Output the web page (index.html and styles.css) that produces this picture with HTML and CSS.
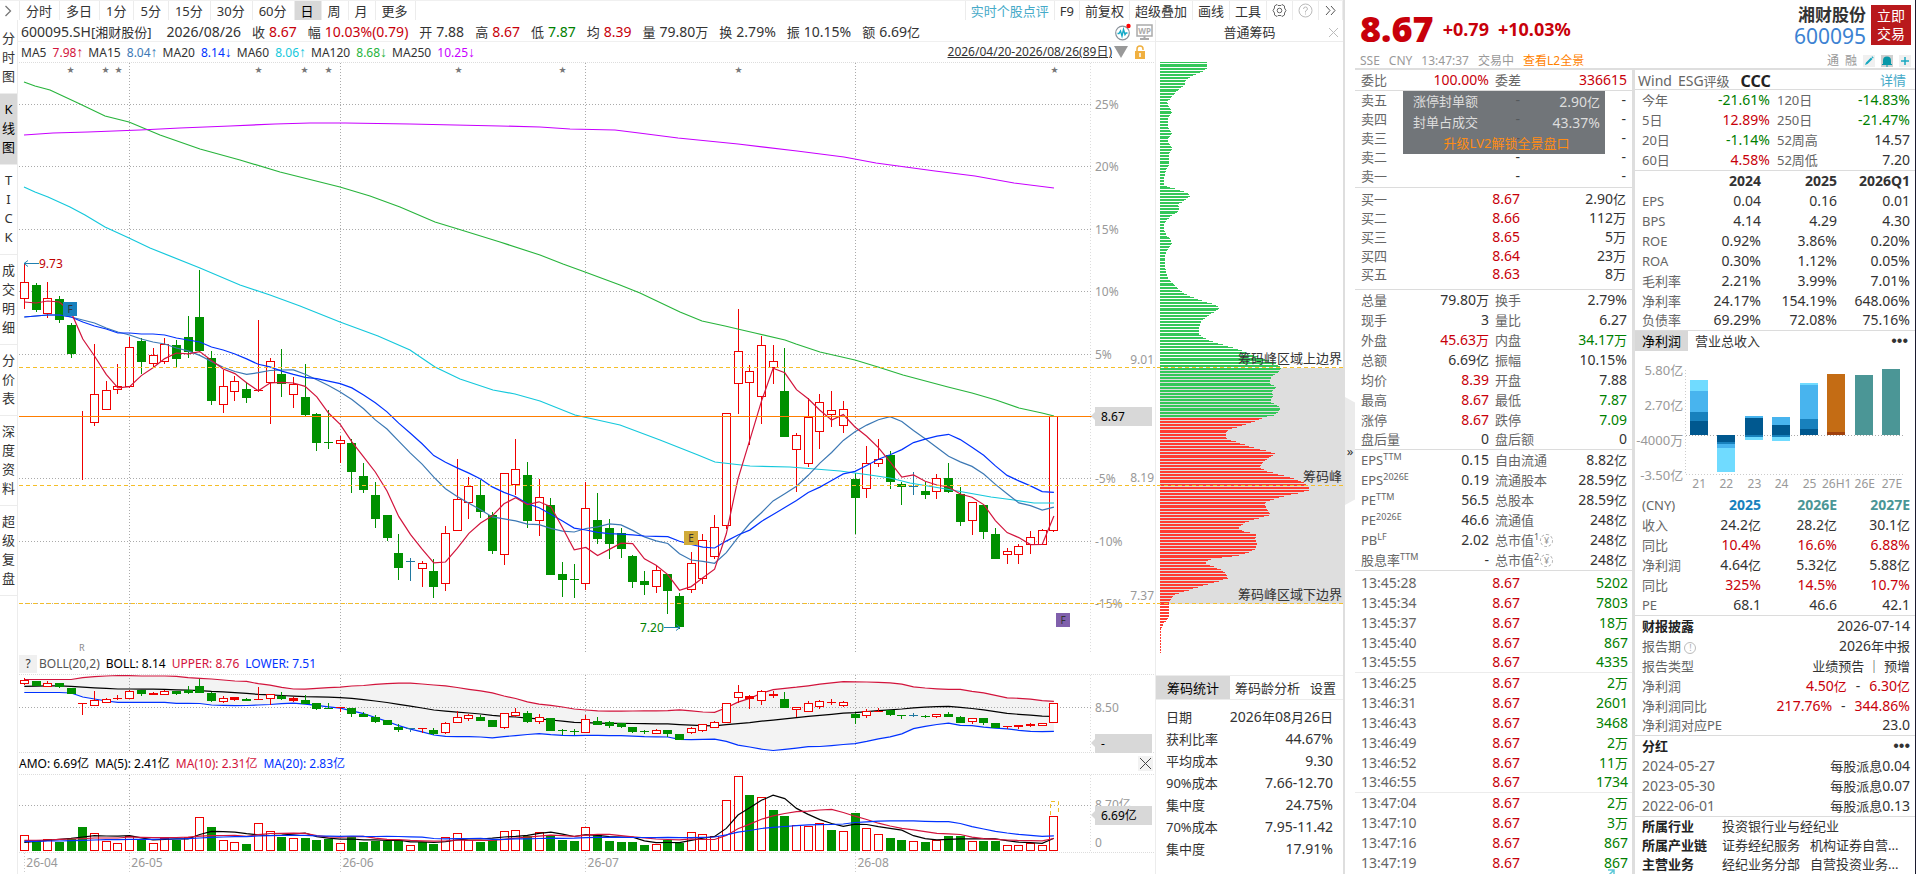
FILE: index.html
```html
<!DOCTYPE html>
<html lang="zh-CN">
<head>
  <meta charset="UTF-8">
  <meta name="viewport" content="width=device-width, initial-scale=1.0">
  <title>湘财股份 600095.SH</title>
  <link rel="stylesheet" href="styles.css">
</head>
<body>
<main class="workspace">
  <nav class="toolbar">
    <button class="expand" aria-label="展开"><svg width="8" height="12" viewBox="0 0 8 12"><path d="M1.5 1L6.5 6L1.5 11" fill="none" stroke="#777" stroke-width="1.3"/></svg></button>
    <button>分时</button><button>多日</button><button>1分</button><button>5分</button><button>15分</button><button>30分</button><button>60分</button><button class="active">日</button><button>周</button><button>月</button><button>更多</button>
    <div class="tools">
      <button class="comment">实时个股点评</button><button>F9</button><button>前复权</button><button>超级叠加</button><button>画线</button><button>工具</button>
      <button aria-label="设置"><svg width="15" height="15" viewBox="0 0 15 15" fill="none" stroke="#666"><path d="M5 1.5L6 2.5H9L10 1.500L12.500 3V5L14 7.5L12.5 10V12L10 13.5L9 12.5H6L5 13.5L2.5 12V10L1 7.5L2.5 5V3Z"/><circle cx="7.5" cy="7.5" r="2.3"/></svg></button>
      <button aria-label="帮助"><svg width="15" height="15" viewBox="0 0 15 15" fill="none" stroke="#bbb"><circle cx="7.5" cy="7.5" r="6.5"/><path d="M5.5 6Q5.5 4 7.5 4T9.5 6Q9.5 7 7.5 8V9.5M7.5 10.5V11.5"/></svg></button>
      <button aria-label="更多工具"><svg width="13" height="11" viewBox="0 0 13 11" fill="none" stroke="#555"><path d="M2 1L6 5.5L2 10M7 1L11 5.5L7 10"/></svg></button>
    </div>
  </nav>

  <div class="work-body">
    <nav class="side">
      <button>分<br>时<br>图</button>
      <button class="active">K<br>线<br>图</button>
      <button>T<br>I<br>C<br>K</button>
      <button>成<br>交<br>明<br>细</button>
      <button>分<br>价<br>表</button>
      <button>深<br>度<br>资<br>料</button>
      <button>超<br>级<br>复<br>盘</button>
    </nav>

    <section class="charts">
      <div class="summary">
        <span class="code">600095.SH<b>[湘财股份]</b></span>
        <span class="day">2026/08/26</span>
        <span><b>收</b><em class="red">8.67</em></span>
        <span><b>幅</b><em class="red">10.03%(0.79)</em></span>
        <span><b>开</b><em>7.88</em></span>
        <span><b>高</b><em class="red">8.67</em></span>
        <span><b>低</b><em class="green">7.87</em></span>
        <span><b>均</b><em class="red">8.39</em></span>
        <span><b>量</b><em>79.80<b>万</b></em></span>
        <span><b>换</b><em>2.79%</em></span>
        <span><b>振</b><em>10.15%</em></span>
        <span><b>额</b><em>6.69<b>亿</b></em></span>
        <div class="right-icons">
          <svg width="16" height="18" viewBox="0 0 16 18"><circle cx="7.5" cy="10" r="6.8" fill="none" stroke="#8a929a" stroke-width="1.2"/><path d="M2.5 10.5H4L5.5 8L7 13L8.5 6.5L10 11.5L11 10H12.5" fill="none" stroke="#14aac8" stroke-width="1.4"/><circle cx="13.5" cy="3" r="2.2" fill="#f00"/></svg>
          <svg width="17" height="16" viewBox="0 0 17 16"><rect x="1" y="1" width="15" height="11" fill="none" stroke="#aaa" stroke-width="1.5"/><text x="8.5" y="9.5" font-size="8" font-weight="700" text-anchor="middle" fill="#aaa">WP</text><path d="M8.5 12V14M4 15H13" stroke="#aaa" stroke-width="2"/></svg>
        </div>
      </div>
      <div class="ma-row">
        <span>MA5 <em class="c5">7.98<i>↑</i></em></span>
        <span>MA15 <em class="c15">8.04<i>↑</i></em></span>
        <span>MA20 <em class="c20">8.14<i>↓</i></em></span>
        <span>MA60 <em class="c60">8.06<i>↑</i></em></span>
        <span>MA120 <em class="c120">8.68<i>↓</i></em></span>
        <span>MA250 <em class="c250">10.25<i>↓</i></em></span>
        <div class="range">
          <a href="#">2026/04/20-2026/08/26(89日)</a>
          <svg width="14" height="12" viewBox="0 0 14 12"><path d="M0 0H14L7 12Z" fill="#999"/></svg>
          <svg class="lock" width="10" height="14" viewBox="0 0 10 14"><path d="M2 6V4A3 3 0 0 1 8 4V5" fill="none" stroke="#f0b040" stroke-width="1.5"/><rect y="6" width="10" height="8" fill="#f0b040"/><path d="M5 8V12" stroke="#fff" stroke-width="1.5"/></svg>
        </div>
      </div>
      <svg id="price" class="pane price"></svg>
      <div class="ind-row">
        <button class="ask">?</button><span class="muted">BOLL(20,2)</span><span class="black">BOLL: 8.14</span><span class="c5">UPPER: 8.76</span><span class="c20">LOWER: 7.51</span>
      </div>
      <svg id="boll" class="pane boll"></svg>
      <div class="ind-row">
        <span class="black">AMO: 6.69亿</span><span class="black">MA(5): 2.41亿</span><span class="c5">MA(10): 2.31亿</span><span class="c20">MA(20): 2.83亿</span>
        <button class="shut" aria-label="关闭"><svg width="11" height="11" viewBox="0 0 11 11"><path d="M0 0L11 11M11 0L0 11" stroke="#444"/></svg></button>
      </div>
      <svg id="amo" class="pane amo"></svg>
      <svg id="dates" class="pane dates"></svg>
    </section>

    <section class="chips">
      <header>普通筹码<button aria-label="关闭"><svg width="9" height="9" viewBox="0 0 9 9"><path d="M0 0L9 9M9 0L0 9" stroke="#bbb"/></svg></button></header>
      <svg id="chip" class="pane chip"></svg>
      <div class="chip-tabs"><button class="active">筹码统计</button><button>筹码龄分析</button><button>设置</button></div>
      <table class="chip-table">
        <tr><th>日期</th><td>2026<b>年</b>08<b>月</b>26<b>日</b></td></tr>
        <tr><th>获利比率</th><td>44.67%</td></tr>
        <tr><th>平均成本</th><td>9.30</td></tr>
        <tr><th>90%成本</th><td>7.66-12.70</td></tr>
        <tr><th>集中度</th><td>24.75%</td></tr>
        <tr><th>70%成本</th><td>7.95-11.42</td></tr>
        <tr><th>集中度</th><td>17.91%</td></tr>
      </table>
    </section>
  </div>
</main>

<div class="gutter"><button aria-label="收起">»</button></div>

<aside class="quote">
  <header class="head">
    <div class="head-price">
      <div class="last"><strong>8.67</strong><span>+0.79</span><span>+10.03%</span></div>
      <div class="market"><span>SSE</span><span>CNY</span><span>13:47:37</span><span>交易中</span><a href="#">查看L2全景</a></div>
    </div>
    <div class="head-name">
      <div class="name-line">
        <div class="name"><h1>湘财股份</h1><span>600095</span></div>
        <button class="trade">立即<br>交易</button>
      </div>
      <div class="flags">
        <span>通</span><span>融</span>
        <button aria-label="编辑"><svg width="12" height="12" viewBox="0 0 12 12"><path d="M2 10L3 7.5L8 2.5L9.5 4L4.5 9ZM8.5 2L9.3 1.3L10.7 2.7L10 3.5Z" fill="#18a8c0"/></svg></button>
        <button class="on" aria-label="提醒"><svg width="12" height="12" viewBox="0 0 12 12"><path d="M2 9V5.5A4 4 0 0 1 10 5.5V9H11V10H1V9ZM5 10.5H7V11.5H5Z" fill="#0898a8"/></svg></button>
        <button aria-label="添加"><svg width="12" height="12" viewBox="0 0 12 12"><path d="M6 2V10M2 6H10" stroke="#18a8c0" stroke-width="1.5"/></svg></button>
      </div>
    </div>
  </header>

  <div class="quote-cols">
    <section class="book">
      <table class="four line">
        <tr><th>委比</th><td class="red">100.00%</td><th>委差</th><td class="red">336615</td></tr>
      </table>
      <table class="orders asks line">
        <tr><th>卖五</th><td>-</td><td>-</td></tr>
        <tr><th>卖四</th><td>-</td><td>-</td></tr>
        <tr><th>卖三</th><td>-</td><td>-</td></tr>
        <tr><th>卖二</th><td>-</td><td>-</td></tr>
        <tr><th>卖一</th><td>-</td><td>-</td></tr>
      </table>
      <div class="lv2">
        <div><span>涨停封单额</span><em>2.90<b>亿</b></em></div>
        <div><span>封单占成交</span><em>43.37%</em></div>
        <a href="#">升级LV2解锁全景盘口</a>
      </div>
      <table class="orders bids line">
        <tr><th>买一</th><td>8.67</td><td>2.90<b>亿</b></td></tr>
        <tr><th>买二</th><td>8.66</td><td>112<b>万</b></td></tr>
        <tr><th>买三</th><td>8.65</td><td>5<b>万</b></td></tr>
        <tr><th>买四</th><td>8.64</td><td>23<b>万</b></td></tr>
        <tr><th>买五</th><td>8.63</td><td>8<b>万</b></td></tr>
      </table>
      <table class="four line">
        <tr><th>总量</th><td>79.80<b>万</b></td><th>换手</th><td>2.79%</td></tr>
        <tr><th>现手</th><td>3</td><th>量比</th><td>6.27</td></tr>
        <tr><th>外盘</th><td class="red">45.63<b>万</b></td><th>内盘</th><td class="green">34.17<b>万</b></td></tr>
        <tr><th>总额</th><td>6.69<b>亿</b></td><th>振幅</th><td>10.15%</td></tr>
        <tr><th>均价</th><td class="red">8.39</td><th>开盘</th><td>7.88</td></tr>
        <tr><th>最高</th><td class="red">8.67</td><th>最低</th><td class="green">7.87</td></tr>
        <tr><th>涨停</th><td class="red">8.67</td><th>跌停</th><td class="green">7.09</td></tr>
        <tr><th>盘后量</th><td>0</td><th>盘后额</th><td>0</td></tr>
      </table>
      <table class="four line">
        <tr><th>EPS<sup>TTM</sup></th><td>0.15</td><th>自由流通</th><td>8.82<b>亿</b></td></tr>
        <tr><th>EPS<sup>2026E</sup></th><td>0.19</td><th>流通股本</th><td>28.59<b>亿</b></td></tr>
        <tr><th>PE<sup>TTM</sup></th><td>56.5</td><th>总股本</th><td>28.59<b>亿</b></td></tr>
        <tr><th>PE<sup>2026E</sup></th><td>46.6</td><th>流通值</th><td>248<b>亿</b></td></tr>
        <tr><th>PB<sup>LF</sup></th><td>2.02</td><th>总市值<sup>1</sup><i class="yen">¥</i></th><td>248<b>亿</b></td></tr>
        <tr><th>股息率<sup>TTM</sup></th><td>-</td><th>总市值<sup>2</sup><i class="yen">¥</i></th><td>248<b>亿</b></td></tr>
      </table>
      <table class="ticks">
        <tr><th>13:45:28</th><td>8.67</td><td>5202</td></tr>
        <tr><th>13:45:34</th><td>8.67</td><td>7803</td></tr>
        <tr><th>13:45:37</th><td>8.67</td><td>18<b>万</b></td></tr>
        <tr><th>13:45:40</th><td>8.67</td><td>867</td></tr>
        <tr class="minute"><th>13:45:55</th><td>8.67</td><td>4335</td></tr>
        <tr><th>13:46:25</th><td>8.67</td><td>2<b>万</b></td></tr>
        <tr><th>13:46:31</th><td>8.67</td><td>2601</td></tr>
        <tr><th>13:46:43</th><td>8.67</td><td>3468</td></tr>
        <tr><th>13:46:49</th><td>8.67</td><td>2<b>万</b></td></tr>
        <tr><th>13:46:52</th><td>8.67</td><td>11<b>万</b></td></tr>
        <tr class="minute"><th>13:46:55</th><td>8.67</td><td>1734</td></tr>
        <tr><th>13:47:04</th><td>8.67</td><td>2<b>万</b></td></tr>
        <tr><th>13:47:10</th><td>8.67</td><td>3<b>万</b></td></tr>
        <tr><th>13:47:16</th><td>8.67</td><td>867</td></tr>
        <tr><th>13:47:19</th><td>8.67</td><td>867</td></tr>
      </table>
      <svg class="popout" width="8" height="8" viewBox="0 0 8 8"><path d="M1 1H7V7M7 1L1 7" fill="none" stroke="#5cc8d8" stroke-width="1.5"/></svg>
    </section>

    <section class="info">
      <div class="esg line"><span>Wind</span><span>ESG<b>评级</b></span><strong>CCC</strong><a href="#">详情</a></div>
      <table class="perf line">
        <tr><th>今年</th><td class="green">-21.61%</td><th>120日</th><td class="green">-14.83%</td></tr>
        <tr><th>5日</th><td class="red">12.89%</td><th>250日</th><td class="green">-21.47%</td></tr>
        <tr><th>20日</th><td class="green">-1.14%</td><th>52周高</th><td>14.57</td></tr>
        <tr><th>60日</th><td class="red">4.58%</td><th>52周低</th><td>7.20</td></tr>
      </table>
      <table class="years line">
        <tr class="top"><th></th><td>2024</td><td>2025</td><td>2026Q1</td></tr>
        <tr><th>EPS</th><td>0.04</td><td>0.16</td><td>0.01</td></tr>
        <tr><th>BPS</th><td>4.14</td><td>4.29</td><td>4.30</td></tr>
        <tr><th>ROE</th><td>0.92%</td><td>3.86%</td><td>0.20%</td></tr>
        <tr><th>ROA</th><td>0.30%</td><td>1.12%</td><td>0.05%</td></tr>
        <tr><th>毛利率</th><td>2.21%</td><td>3.99%</td><td>7.01%</td></tr>
        <tr><th>净利率</th><td>24.17%</td><td>154.19%</td><td>648.06%</td></tr>
        <tr><th>负债率</th><td>69.29%</td><td>72.08%</td><td>75.16%</td></tr>
      </table>
      <div class="info-tabs"><button class="active">净利润</button><button>营业总收入</button><button class="dots" aria-label="更多">•••</button></div>
      <svg id="profit" class="pane profit"></svg>
      <table class="years line">
        <tr class="top"><th>(CNY)</th><td class="blue">2025</td><td class="teal">2026E</td><td class="teal">2027E</td></tr>
        <tr><th>收入</th><td>24.2<b>亿</b></td><td>28.2<b>亿</b></td><td>30.1<b>亿</b></td></tr>
        <tr class="red"><th>同比</th><td>10.4%</td><td>16.6%</td><td>6.88%</td></tr>
        <tr><th>净利润</th><td>4.64<b>亿</b></td><td>5.32<b>亿</b></td><td>5.88<b>亿</b></td></tr>
        <tr class="red"><th>同比</th><td>325%</td><td>14.5%</td><td>10.7%</td></tr>
        <tr><th>PE</th><td>68.1</td><td>46.6</td><td>42.1</td></tr>
      </table>
      <table class="pairs line">
        <tr><th class="title">财报披露</th><td>2026-07-14</td></tr>
        <tr><th>报告期 <i class="note">!</i></th><td>2026<b>年中报</b></td></tr>
        <tr><th>报告类型</th><td><b>业绩预告 ｜ 预增</b></td></tr>
        <tr><th>净利润</th><td><span class="red">4.50<b>亿</b></span><span class="to">-</span><span class="red">6.30<b>亿</b></span></td></tr>
        <tr><th>净利润同比</th><td><span class="red">217.76%</span><span class="to">-</span><span class="red">344.86%</span></td></tr>
        <tr><th>净利润对应PE</th><td>23.0</td></tr>
      </table>
      <table class="pairs line">
        <tr><th class="title">分红</th><td><button class="dots" aria-label="更多">•••</button></td></tr>
        <tr><th class="date">2024-05-27</th><td><b>每股派息</b>0.04</td></tr>
        <tr><th class="date">2023-05-30</th><td><b>每股派息</b>0.07</td></tr>
        <tr><th class="date">2022-06-01</th><td><b>每股派息</b>0.13</td></tr>
      </table>
      <table class="belong">
        <tr><th>所属行业</th><td>投资银行业与经纪业</td></tr>
        <tr><th>所属产业链</th><td><span>证券经纪服务</span><span>机构证券自营...</span></td></tr>
        <tr><th>主营业务</th><td><span>经纪业务分部</span><span>自营投资业务...</span></td></tr>
      </table>
    </section>
  </div>
</aside>
<script src="charts.js"></script>
</body>
</html>
```
FILE: styles.css
```css
* {
  box-sizing: border-box;
}
body {
  margin: 0;
  height: 100vh;
  display: flex;
  overflow: hidden;
  background: #fff;
  color: #333;
  font-family: "Noto Sans", "Noto Sans CJK SC", sans-serif;
  font-size: 13px;
  line-height: 20px;
}
button {
  border: 0;
  padding: 0;
  background: none;
  color: inherit;
  font: inherit;
  cursor: pointer;
}
a { color: inherit; }
em, i { font-style: normal; }
svg { display: block; }
table {
  width: 100%;
  border-collapse: collapse;
  table-layout: fixed;
}
th, td {
  padding: 0;
  height: 20px;
  line-height: 18px;
  white-space: nowrap;
}
th {
  font-weight: 400;
  text-align: left;
  color: #666;
}
td {
  text-align: right;
  font-size: 14px;
}
td b, em b {
  font-size: 13px;
  font-weight: 400;
}
.red, .red td { color: #c8000a; }
.green { color: #008000; }
.black { color: #000; }
.muted { color: #555; }
.c5 { color: #d2143c; }
.c15 { color: #3c78b4; }
.c20 { color: #0032ff; }
.c60 { color: #14c8dc; }
.c120 { color: #28b43c; }
.c250 { color: #c800ff; }
.line { border-bottom: 1px solid #dcdcdc; }
.active { background: #d8d8d8; color: #000; }

/* left workspace */
.workspace {
  flex: 1;
  min-width: 0;
  display: flex;
  flex-direction: column;
  border-right: 2px solid #dedede;
}
.toolbar {
  display: flex;
  height: 20px;
  flex: none;
  border-top: 1px solid #f0f0f0;
}
.toolbar button {
  padding: 0 6px;
  border-right: 1px solid #ececec;
  white-space: nowrap;
}
.toolbar > button { padding-right: 7px; }
.toolbar .expand {
  width: 20px;
  padding: 0 4px;
}
.tools {
  margin-left: auto;
  display: flex;
  border-left: 1px solid #ececec;
}
.tools button { padding: 0 5px; }
.tools .comment { color: #46aac8; }
.work-body {
  flex: 1;
  min-height: 0;
  display: flex;
}
.side {
  width: 18px;
  flex: none;
  padding-top: 3px;
  border-right: 1px solid #ececec;
}
.side button {
  display: block;
  width: 100%;
  padding: 6px 0 7px;
  border-bottom: 1px solid #ececec;
  line-height: 19px;
}
.charts {
  flex: 1;
  min-width: 0;
  display: flex;
  flex-direction: column;
}
.summary {
  display: flex;
  height: 22px;
  flex: none;
  align-items: center;
  gap: 11px;
  padding: 2px 2px 0 3px;
  font-size: 14px;
  border-bottom: 1px solid #f0f0f0;
  white-space: nowrap;
}
.summary b {
  font-size: 13px;
  font-weight: 400;
}
.summary > span > b { margin-right: 4px; }
.summary .code b { margin: 0; }
.summary .day { margin-left: 4px; }
.right-icons {
  margin-left: auto;
  display: flex;
  align-items: center;
  gap: 5px;
}
.ma-row {
  display: flex;
  height: 20px;
  flex: none;
  align-items: center;
  gap: 5px;
  padding: 0 10px 0 3px;
  font-size: 12px;
  white-space: nowrap;
}
.ma-row em { margin-left: 3px; }
.ma-row i {
  font-family: "Liberation Sans", sans-serif;
  font-size: 14px;
}
.range {
  margin-left: auto;
  display: flex;
  align-items: center;
  gap: 2px;
}
.range .lock { margin-left: 5px; }
.ind-row {
  display: flex;
  height: 21px;
  flex: none;
  align-items: center;
  gap: 6px;
  padding: 0 2px 0 1px;
  font-size: 12px;
}
.ask {
  width: 18px;
  height: 18px;
  line-height: 18px;
  margin-right: -4px;
  background: #f0f0f0;
}
.shut {
  margin-left: auto;
  padding: 2px;
  background: #f2f2f2;
}
.pane {
  width: 100%;
  flex: none;
}
.pane text { font-size: 12px; }
.price { flex: 1; min-height: 0; height: 0; }
.boll { height: 79px; }
.amo { height: 78px; }
.dates { height: 22px; }

/* chip distribution */
.chips {
  width: 188px;
  flex: none;
  display: flex;
  flex-direction: column;
  border-left: 1px solid #ececec;
}
.chips header {
  height: 22px;
  flex: none;
  padding-top: 2px;
  text-align: center;
  position: relative;
  border-bottom: 1px solid #ececec;
}
.chips header button {
  position: absolute;
  right: 5px;
  top: 8px;
}
.chip {
  flex: 1;
  min-height: 0;
  height: 0;
}
.chip text { font-size: 13px; }
.chip-tabs {
  display: flex;
  height: 25px;
  flex: none;
  border: 1px solid #ececec;
  border-width: 1px 0;
}
.chip-tabs button { padding: 0 5px; }
.chip-tabs .active { padding: 0 11px; }
.chip-table {
  width: auto;
  margin: 6px 10px 14px;
  table-layout: auto;
}
.chip-table th, .chip-table td {
  height: 22px;
  line-height: 20px;
  color: #333;
}

.gutter {
  width: 10px;
  flex: none;
  display: flex;
  align-items: center;
  padding-bottom: 0;
}
.gutter button {
  width: 10px;
  height: 108px;
  margin-top: 28px;
  background: #ebebeb;
  clip-path: polygon(0 0, 100% 5%, 100% 95%, 0 100%);
}

/* quote */
.quote {
  width: 561px;
  flex: none;
  display: flex;
  flex-direction: column;
  border-right: 1px solid #1c1c30;
}
.head {
  height: 70px;
  flex: none;
  display: flex;
  justify-content: space-between;
  padding: 5px 4px 0 5px;
  border-bottom: 2px solid #dedede;
}
.last {
  display: flex;
  align-items: center;
  gap: 9px;
  height: 48px;
  color: #c8000a;
  font-size: 18px;
  font-weight: 700;
}
.last strong { font-size: 36px; }
.market {
  display: flex;
  gap: 9px;
  font-size: 12px;
  line-height: 16px;
  color: #999;
}
.market a {
  color: #ff8200;
  text-decoration: none;
}
.name-line {
  display: flex;
  align-items: flex-start;
  gap: 5px;
}
.name {
  text-align: right;
}
.name h1 {
  margin: 0;
  font-size: 17px;
  line-height: 20px;
}
.name span {
  display: block;
  font-size: 21px;
  line-height: 22px;
  color: #3c82d2;
}
.trade {
  width: 40px;
  height: 40px;
  background: #b9191c;
  color: #fff;
  font-size: 14px;
  line-height: 18px;
}
.flags {
  display: flex;
  justify-content: flex-end;
  align-items: center;
  gap: 6px;
  margin-top: 4px;
  height: 20px;
  font-size: 12px;
  color: #999;
}
.flags button { background: #f0f0f0; }
.flags .on { background: #d0d0d0; }
.quote-cols {
  flex: 1;
  min-height: 0;
  display: flex;
}
.book {
  flex: 1;
  min-width: 0;
  position: relative;
}
.book th:first-child { padding-left: 6px; }
.four th { width: 52px; }
.four th:first-child { width: 74px; }
.four th + td { width: 60px; }
.four td:last-child { width: auto; padding-right: 5px; }
.four th:nth-child(3) { padding-left: 6px; width: 72px; }
sup {
  font-size: 9px;
  line-height: 8px;
  vertical-align: 5px;
}
.yen {
  display: inline-block;
  width: 13px;
  height: 13px;
  margin-left: 1px;
  border: 1px dashed #aaa;
  border-radius: 50%;
  font-size: 9px;
  line-height: 11px;
  text-align: center;
  color: #999;
  vertical-align: 1px;
}
.orders th, .orders td { height: 19px; }
.orders th { width: 60px; }
.orders td:nth-child(2) { width: 105px; }
.orders td:last-child { padding-right: 6px; }
.asks { margin-bottom: 1px; }
.bids td:nth-child(2) { color: #c8000a; }
.asks tr:last-child > * { height: 21px; padding-bottom: 2px; }
.bids tr:last-child > * { height: 24px; padding-bottom: 5px; }
.lv2 {
  position: absolute;
  left: 48px;
  right: 27px;
  top: 21px;
  height: 63px;
  padding: 0 5px 0 10px;
  background: rgba(90, 94, 99, 0.86);
  color: #ddd;
  line-height: 21px;
}
.lv2 div {
  display: flex;
  justify-content: space-between;
  height: 21px;
}
.lv2 em { font-size: 14px; }
.lv2 a {
  display: block;
  text-align: center;
  text-decoration: none;
  color: #ff8c14;
}
.ticks { margin-top: 2px; }
.ticks th {
  width: 70px;
  font-size: 14px;
}
.ticks td { color: #008000; padding-right: 4px; }
.ticks td:nth-child(2) { width: 99px; color: #c8000a; }
.minute { border-bottom: 1px solid #ececec; }
.popout {
  position: absolute;
  right: 17px;
  bottom: -3px;
}

.info {
  width: 283px;
  flex: none;
  border-left: 3px solid #dedede;
}
.info th { padding-left: 7px; }
.info td { padding-right: 5px; }
.esg {
  display: flex;
  height: 20px;
  padding: 0 9px 0 3px;
  gap: 6px;
  font-size: 14px;
  line-height: 22px;
  color: #666;
}
.esg b {
  font-size: 13px;
  font-weight: 400;
}
.esg strong {
  margin-left: 5px;
  font-size: 16px;
  color: #222;
}
.esg a {
  margin-left: auto;
  font-size: 13px;
  line-height: 20px;
  text-decoration: none;
  color: #46aac8;
}
.perf th { width: 64px; }
.perf th:first-child { width: 60px; }
.perf td:nth-child(2) { width: 75px; padding: 0; }
.years th { width: 50px; }
.years td:nth-child(2), .years td:nth-child(3) { width: 76px; padding: 0; }
.top td { font-weight: 700; }
.top .blue { color: #1881bd; }
.top .teal { color: #4b9696; }
.info-tabs {
  display: flex;
  height: 20px;
}
.info-tabs button { padding: 0 7px; }
.dots {
  margin-left: auto;
  font-family: "Liberation Sans", sans-serif;
  font-size: 16px;
}
.profit { height: 144px; }
.profit text { fill: #999; }
.note {
  display: inline-block;
  width: 12px;
  height: 12px;
  border: 1px solid #bbb;
  border-radius: 50%;
  font-size: 9px;
  line-height: 10px;
  text-align: center;
  color: #aaa;
}
.to { margin: 0 9px; }
.pairs .title {
  font-weight: 700;
  color: #222;
}
.pairs .date { font-size: 14px; }
.pairs td .dots { line-height: 18px; }
.belong th {
  width: 87px;
  font-weight: 700;
  color: #222;
}
.belong td {
  text-align: left;
  font-size: 13px;
}
.belong th, .belong td { height: 19px; }
.belong span { margin-right: 10px; }
```
FILE: charts.js
```js
// candles: [high, body top, body bottom, low, colour], in chart units (62 = pane top, 653 = pane bottom)
const days = [
  [263,282,298,308,'r'],[282,285,309,311,'g'],[281,298,313,317,'r'],[295,299,319,322,'g'],[322,325,353,357,'g'],
  [410,416,416,479,'r'],[343,394,422,425,'r'],[380,390,409,409,'r'],[363,386,389,393,'r'],[336,347,386,387,'r'],
  [337,341,361,373,'g'],[347,355,363,367,'r'],[337,344,361,363,'r'],[339,345,358,367,'g'],[315,337,351,357,'g'],
  [269,317,350,351,'g'],[350,358,400,404,'g'],[369,386,404,412,'r'],[375,381,391,400,'r'],[381,389,397,402,'g'],
  [319,390,390,391,'r'],[357,361,382,423,'r'],[348,374,383,396,'g'],[376,384,394,407,'r'],[363,397,414,416,'g'],
  [412,414,442,450,'g'],[409,442,442,448,'g'],[435,440,443,462,'r'],[438,443,471,492,'g'],[462,476,489,492,'g'],
  [481,495,518,527,'g'],[515,515,537,540,'g'],[533,553,567,579,'g'],[557,561,561,580,'b'],[560,563,568,586,'r'],
  [558,571,586,597,'g'],[525,533,583,590,'r'],[458,499,530,530,'r'],[476,486,502,518,'r'],[479,495,511,517,'g'],
  [511,515,550,553,'g'],[472,473,554,564,'r'],[438,469,484,494,'r'],[461,475,520,527,'g'],[478,497,520,535,'r'],
  [497,505,574,574,'g'],[561,574,579,596,'g'],[563,579,579,597,'g'],[481,508,583,589,'r'],[492,520,538,543,'g'],
  [518,528,543,558,'g'],[527,533,548,557,'g'],[554,556,581,587,'g'],[570,581,584,594,'g'],[565,570,586,592,'r'],
  [574,574,590,613,'g'],[592,596,626,628,'g'],[551,563,589,592,'r'],[533,540,578,583,'r'],[514,527,556,558,'r'],
  [413,413,525,528,'r'],[308,351,383,413,'r'],[364,371,382,444,'r'],[335,345,396,423,'r'],[344,361,367,383,'r'],
  [347,391,436,436,'g'],[432,435,449,491,'r'],[397,417,463,466,'r'],[393,402,431,448,'r'],[390,410,414,426,'r'],
  [400,409,425,432,'r'],[472,479,497,533,'g'],[445,463,488,497,'r'],[438,459,463,466,'r'],[450,455,481,488,'g'],
  [481,484,486,504,'g'],[471,486,486,494,'b'],[481,491,494,498,'g'],[473,478,491,498,'r'],[462,478,491,492,'g'],
  [486,494,521,525,'g'],[501,502,520,534,'r'],[504,505,531,538,'g'],[527,534,558,558,'g'],[547,551,554,563,'r'],
  [543,546,554,563,'r'],[530,537,544,553,'r'],[528,530,544,544,'r'],[416,416,530,531,'r']
];
const amount = [
  49,34,37,28,36,71,55,31,25,45,37,25,38,34,43,103,71,34,28,20,
  85,61,41,40,38,32,37,25,43,26,31,29,29,19,26,20,43,55,32,26,
  32,61,64,46,58,48,32,29,73,47,31,26,26,17,22,32,25,58,52,46,
  154,226,167,163,122,104,79,76,85,64,61,113,70,52,38,34,31,26,34,44,
  44,31,29,29,19,19,25,19,106
];
const amountGreen = new Set([1,3,4,5,10,13,16,19,22,24,25,26,28,29,30,31,32,34,35,39,40,43,45,46,47,49,50,51,52,53,55,56,62,64,65,69,71,74,75,77,79,80,82,83]);

const close = days.map(d => d[4] === 'r' ? d[1] : d[2]);
const RED = '#f00000', GREEN = '#009000', BLUE = '#2078a0';
const colours = {r: RED, g: GREEN, b: BLUE};
const months = [[129.3,'26-05'],[340.4,'26-06'],[585.6,'26-07'],[855.5,'26-08']];
const dayX = i => 24.3 + i * 11.7;

function average(values, n, seed) {
  return values.map((v, i) => i < seed.length ? seed[i]
    : values.slice(i - n + 1, i + 1).reduce((a, b) => a + b, 0) / n);
}
const ma5 = average(close, 5, [302,303,301,302]);
const ma15 = average(close, 15, [317,316,315,315,317,320,323,328,332,335,339,342,344,348]);
const ma20 = average(close, 20, [317,316,315,315,317,322,326,329,333,333,334,334,335,338,340,342,347,350,354]);

// draws in base coordinates, fitted to the real size of the pane
function pane(id, x0, y0, w, h) {
  const el = document.getElementById(id);
  const box = el.getBoundingClientRect();
  const kx = box.width / w, ky = box.height / h;
  const X = x => +((x - x0) * kx).toFixed(1), Y = y => +((y - y0) * ky).toFixed(1);
  let out = '';
  return {
    X, Y,
    line(x1, y1, x2, y2, c, dash) {
      out += `<line x1="${Math.floor(X(x1)) + .5}" y1="${Math.floor(Y(y1)) + .5}" x2="${Math.floor(X(x2)) + .5}" y2="${Math.floor(Y(y2)) + .5}" stroke="${c}" ${dash ? `stroke-dasharray="${dash}"` : ''} shape-rendering="crispEdges"/>`;
    },
    rect(x, y, w, h, c, stroke) {
      const o = stroke ? .5 : 0;
      out += `<rect x="${Math.floor(X(x)) + o}" y="${Math.round(Y(y)) + o}" width="${Math.max(1, Math.round(w) - 2 * o)}" height="${Math.max(1, Math.round(h * ky) - 2 * o)}" fill="${c}" ${stroke ? `stroke="${stroke}"` : ''} shape-rendering="crispEdges"/>`;
    },
    poly(points, c) {
      out += `<polyline points="${points.map(p => X(p[0]) + ',' + Y(p[1])).join(' ')}" fill="none" stroke="${c}" stroke-width="1.2"/>`;
    },
    area(points, c) {
      out += `<polygon points="${points.map(p => X(p[0]) + ',' + Y(p[1])).join(' ')}" fill="${c}"/>`;
    },
    text(x, y, s, c, extra) {
      out += `<text x="${X(x)}" y="${Y(y) + 4.5}" fill="${c}" ${extra || ''}>${s}</text>`;
    },
    raw(s) { out += s; },
    end() { el.innerHTML = out; }
  };
}
function candle(p, i, hi, top, bot, lo, c) {
  const x = dayX(i);
  const body = Math.max(1, bot - top + 1);
  if (bot - top < 1) {
    p.line(x, hi, x, lo, c);
    p.rect(x - 4, top, 9, 1, c);
  } else if (c === RED) {
    p.line(x, hi, x, top, c);
    p.line(x, bot, x, lo, c);
    p.rect(x - 4, top, 9, body, body < 3 ? c : '#fff', c);
  } else {
    p.line(x, hi, x, lo, c);
    p.rect(x - 4, top, 9, body, c);
  }
}
function tag(p, y, s) {
  p.area([[1091,y],[1095,y-4],[1095,y-9],[1152,y-9],[1152,y+10],[1095,y+10],[1095,y+4]], '#d8d8d8');
  p.text(1101, y, s, '#000');
}
const series = arr => arr.map((v, i) => [dayX(i), v]);

function drawPrice() {
  const p = pane('price', 18, 62, 1137, 591);
  p.line(18, 62, 1155, 62, '#ddd', '1 1');
  p.line(1090, 62, 1090, 653, '#ddd', '1 2');
  [[104,'25%'],[166,'20%'],[229,'15%'],[291,'10%'],[354,'5%'],[478,'-5%'],[541,'-10%'],[603,'-15%']].forEach(g => {
    p.line(18, g[0], 1090, g[0], '#aaa', '1 2');
    p.text(1095, g[0], g[1], '#999');
  });
  months.forEach(m => p.line(m[0], 62, m[0], 653, '#aaa', '1 2'));
  [70,105,118,258,304,328,458,562,738,1054].forEach(x => p.text(x + .5, 68.5, '★', '#777', 'text-anchor="middle" style="font-family:DejaVu Sans;font-size:9px"'));
  days.forEach((d, i) => candle(p, i, d[0], d[1], d[2], d[3], colours[d[4]]));
  p.poly([[24,82],[35,86],[50,90],[80,104],[105,116],[129,122],[160,135],[200,149],[240,160],[280,172],[320,182],[340,187],[370,196],[400,207],[435,222],[458,229],[500,242],[540,255],[563,264],[585,272],[620,285],[640,293],[680,312],[702,321],[725,326],[742,330],[755,333],[785,340],[796,344],[820,352],[855,360],[878,367],[903,375],[948,387],[972,393],[996,400],[1019,408],[1042,413],[1054,416]], '#28b43c');
  p.poly([[24,135],[53,133],[88,132],[140,130],[180,128],[230,126],[275,124],[310,123],[345,123],[410,124],[500,126],[540,127],[570,129],[615,130],[639,133],[678,138],[738,144],[797,151],[844,157],[876,163],[935,171],[975,176],[1014,183],[1054,188]], '#c800ff');
  p.poly([[24,187],[35,192],[48,197],[70,207],[85,215],[105,227],[129,238],[150,248],[200,268],[240,285],[270,295],[300,306],[340,322],[378,336],[410,350],[435,367],[460,379],[493,390],[515,394],[540,401],[575,415],[620,425],[660,440],[698,455],[715,462],[750,466],[790,467],[840,471],[855,473],[870,475],[890,478],[910,483],[940,488],[963,492],[991,497],[1014,500],[1034,503],[1054,503]], '#14c8dc');
  p.poly(series(ma15), '#3c78b4');
  p.poly(series(ma20), '#0032ff');
  p.poly(series(ma5), '#d2143c');
  [[367,'9.01'],[485,'8.19'],[603,'7.37']].forEach(g => {
    p.line(18, g[0], 1155, g[0], '#f5be28', '4 3');
    p.text(1154, g[0] - 8, g[1], '#999', 'text-anchor="end"');
  });
  p.line(18, 416, 1091, 416, '#ff7d00');
  p.raw(`<path d="M${p.X(39)} ${p.Y(263.5)}H${p.X(24)}m4 -3l-4 3l4 3M${p.X(664)} ${p.Y(627.5)}H${p.X(680)}m-4 -3l4 3l-4 3" fill="none" stroke="#2080b0"/>`);
  p.text(39, 263.5, '9.73', '#c00000');
  p.text(640, 627.5, '7.20', '#008000');
  [[63,302,'F','#1881bd'],[684,531,'E','#d0aa38'],[1056,613,'F','#8060ac']].forEach(b => {
    p.rect(b[0], b[1], 14, 14, b[3]);
    p.text(b[0] + 7, b[1] + 6.5, b[2], '#333', 'text-anchor="middle" style="font-size:10px"');
  });
  p.text(79, 646, 'R', '#888', 'style="font-size:9px"');
  tag(p, 416, '8.67');
  p.end();
}

function drawBoll() {
  const p = pane('boll', 18, 674, 1137, 79);
  const map = y => 703.3 + (y - 416.5) * .171;
  const up = [679.5,679.5,679.5,679.5,679.5,677.7,676.7,676,675.5,675.7,676,676,676,676.3,677.7,678.3,679,680,681];
  const low = [692.5,692.5,692.5,692.5,693,697,699,701,702.3,702.3,702.3,702.3,702.3,703.3,703.3,703.5,705,705.3,705.7];
  // bands two deviations either side of the 20 day mean
  for (let i = 19; i < close.length; i++) {
    const part = close.slice(i - 19, i + 1);
    const sd = Math.sqrt(part.reduce((a, v) => a + (v - ma20[i]) ** 2, 0) / 20);
    up.push(map(ma20[i] - 2 * sd));
    low.push(map(ma20[i] + 2 * sd));
  }
  p.area(series(up).concat(series(low).reverse()), '#f3f3f3');
  p.line(18, 674, 1155, 674, '#ddd', '1 1');
  p.line(18, 752, 1155, 752, '#ddd', '1 1');
  p.line(1090, 674, 1090, 753, '#ddd', '1 2');
  p.line(18, 707, 1090, 707, '#aaa', '1 2');
  months.forEach(m => p.line(m[0], 674, m[0], 753, '#aaa', '1 2'));
  p.poly(series(up), '#d2143c');
  p.poly(series(ma20.map(map)), '#000');
  p.poly(series(low), '#0032ff');
  days.forEach((d, i) => candle(p, i, map(d[0]), map(d[1]), map(d[2]), map(d[3]), colours[d[4]]));
  p.text(1095, 707.5, '8.50', '#999');
  tag(p, 743, '-');
  p.end();
}

function drawAmo() {
  const p = pane('amo', 18, 774, 1137, 78);
  p.line(18, 774, 1155, 774, '#ddd', '1 1');
  p.line(1090, 774, 1090, 852, '#ddd', '1 2');
  p.line(18, 805, 1090, 805, '#aaa', '1 2');
  months.forEach(m => p.line(m[0], 774, m[0], 852, '#aaa', '1 2'));
  amount.forEach((a, i) => {
    const h = a / 3, green = amountGreen.has(i);
    p.rect(dayX(i) - 4, 851 - h, 9, h, green ? GREEN : '#fff', green ? '' : RED);
  });
  p.raw(`<path d="M${p.X(1050.5)} ${p.Y(815)}V${p.Y(801.5)}H${p.X(1058.5)}V${p.Y(815)}" fill="none" stroke="#f0be28" stroke-dasharray="4 3"/>`);
  const toY = arr => series(arr.map(v => 850.7 - v / 3));
  p.poly(toY(average(amount, 5, [25,28,31,34])), '#000');
  p.poly(toY(average(amount, 10, [31,31,32,34,35,36,38,38,38])), '#d2143c');
  p.poly(toY(average(amount, 20, [28,28,29,29,30,31,32,33,33,34,34,34,35,35,36,38,40,41,42])), '#0032ff');
  p.text(1095, 804, '8.70亿', '#999');
  p.text(1095, 842, '0', '#999');
  tag(p, 815, '6.69亿');
  p.end();
}

function drawDates() {
  const p = pane('dates', 18, 852, 1137, 22);
  p.line(18, 852, 1155, 852, '#ddd', '1 1');
  [[24.3,'26-04']].concat(months).forEach(m => {
    p.line(m[0], 852, m[0], 872, '#ccc', '1 2');
    p.text(m[0] + 2, 862, m[1], '#999');
  });
  p.end();
}

function drawChip() {
  const p = pane('chip', 1155, 42, 188, 633);
  const shape = [[62,47],[68,47],[71,43],[75,33],[80,25],[84,25],[88,19],[92,16],[96,12],[102,7],[106,9],[112,12],[118,8],[126,8],[133,12],[138,8],[142,8],[148,12],[153,9],[164,9],[168,7],[173,5],[178,4],[184,4],[187,10],[190,20],[193,28],[196,30],[200,24],[204,18],[208,19],[212,17],[215,12],[220,6],[224,4],[230,4],[235,7],[240,11],[243,12],[247,9],[252,6],[257,5],[265,5],[272,6],[278,8],[284,14],[290,20],[295,28],[300,42],[304,55],[308,60],[313,52],[321,41],[328,39],[334,39],[338,45],[341,52],[345,66],[350,82],[355,95],[360,108],[363,115],[367,121],[372,118],[376,111],[383,110],[387,116],[391,112],[396,113],[401,110],[405,118],[407,120],[411,119],[415,114],[417,103],[420,97],[424,85],[429,69],[432,66],[438,66],[442,78],[446,90],[452,113],[453,115],[457,110],[461,104],[467,100],[470,105],[473,116],[477,132],[480,139],[483,145],[487,149],[490,149],[492,141],[495,127],[498,115],[502,105],[507,106],[514,111],[518,98],[522,85],[527,78],[531,84],[534,97],[538,95],[543,97],[549,95],[553,85],[556,72],[559,50],[563,45],[566,53],[570,63],[574,66],[578,68],[582,55],[586,40],[591,25],[594,15],[598,11],[602,9],[616,9],[620,6],[624,3],[629,1],[653,1]];
  p.rect(1159, 368, 184, 236, '#dedede');
  let k = 0;
  for (let y = 62; y < 652; y += 1.47) {
    while (shape[k + 1][0] < y) k++;
    const a = shape[k], b = shape[k + 1];
    const w = a[1] + (b[1] - a[1]) * (y - a[0]) / (b[0] - a[0]);
    p.rect(1159, y, w, 1, y < 416.5 ? '#34c759' : '#ff3b30');
  }
  [[367,'筹码峰区域上边界'],[485,'筹码峰'],[603,'筹码峰区域下边界']].forEach(g => {
    p.line(1155, g[0], 1343, g[0], '#f5be28', '4 3');
    p.text(1342, g[0] - 9, g[1], '#333', 'text-anchor="end"');
  });
  p.end();
}

function drawProfit() {
  const p = pane('profit', 1635, 351, 279, 144);
  const L = '#70dbff', M = '#48b4ee', D = '#1881bd', N = '#00588f', T = '#4b9696';
  const bars = [
    ['21', 1690, [380,391,L],[391,412,M],[412,421,D],[421,435,N]],
    ['22', 1717, [435,442,N],[442,444,D],[444,448,M],[448,472,L]],
    ['23', 1745, [416,418,M],[418,435,N],[435,437,D],[437,440,L]],
    ['24', 1772, [417,425,M],[425,435,N],[435,437,D],[437,441,L]],
    ['25', 1800, [383,385,L],[385,419,M],[419,429,D],[429,435,N]],
    ['26H1', 1827, [374,432,'#c46c14'],[432,435,'#a0410d']],
    ['26E', 1855, [375,435,T]],
    ['27E', 1882, [369,435,T]]
  ];
  p.line(1685, 369, 1685, 474, '#ccc', '1 2');
  p.line(1685, 474, 1903, 474, '#ccc', '1 2');
  p.line(1685, 435, 1903, 435, '#aaa', '1 2');
  bars.forEach(([name, x, ...parts]) => {
    parts.forEach(s => p.rect(x, s[0], 18, s[1] - s[0], s[2]));
    p.text(x + 9, 483, name, '#999', 'text-anchor="middle"');
  });
  [[370,'5.80亿'],[405,'2.70亿'],[440,'-4000万'],[475,'-3.50亿']].forEach(g => p.text(1683, g[0], g[1], '#999', 'text-anchor="end" style="font-size:13px"'));
  p.end();
}

function drawAll() {
  drawPrice();
  drawBoll();
  drawAmo();
  drawDates();
  drawChip();
  drawProfit();
}
drawAll();
window.addEventListener('resize', drawAll);
```
